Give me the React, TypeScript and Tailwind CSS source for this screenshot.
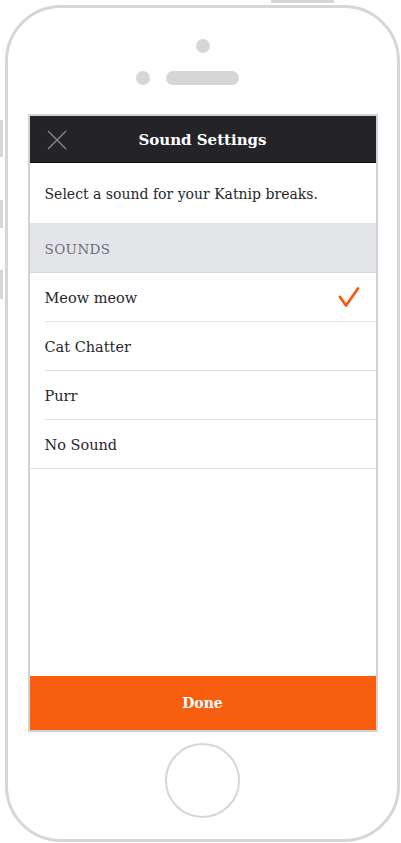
import React from 'react';

const serif = { fontFamily: '"DejaVu Serif", "Liberation Serif", serif' };

const sounds = ['Meow meow', 'Cat Chatter', 'Purr', 'No Sound'];

const App = () => {
  const selected = 'Meow meow';

  return (
    <div className="relative w-[401px] h-[843px] overflow-hidden bg-white" style={serif}>
      {/* Side buttons */}
      <div className="absolute left-[271px] top-0 w-[63px] h-[3px] bg-[#d6d6d6]" />
      <div className="absolute left-0 top-[120px] w-[3px] h-[37px] bg-[#d6d6d6]" />
      <div className="absolute left-0 top-[200px] w-[3px] h-[28px] bg-[#d6d6d6]" />
      <div className="absolute left-0 top-[270px] w-[3px] h-[29px] bg-[#d6d6d6]" />

      {/* Phone body */}
      <div className="ml-[5px] mt-[5px] w-[395px] h-[837px] border-[3px] border-[#d6d6d6] rounded-[56px] flex flex-col items-center">
        <div className="mt-[31px] w-[14px] h-[14px] rounded-full bg-[#d5d6d8]" />
        <div className="mt-[18px] flex items-center gap-4">
          <div className="w-[14px] h-[14px] rounded-full bg-[#d5d6d8]" />
          <div className="w-[73px] h-[14px] rounded-full bg-[#d5d6d8]" />
          <div className="w-[14px] h-[14px]" />
        </div>

        {/* Screen */}
        <div className="mt-[29px] w-[350px] h-[618px] border-2 border-[#d2d2d4] flex flex-col bg-white">
          <div className="h-[47px] shrink-0 bg-[#242428] border-b border-[#0c0c0e] flex items-center relative">
            <svg className="absolute left-[17px] top-[14px]" width="20" height="20" viewBox="0 0 20 20">
              <path d="M1 1L19 19M19 1L1 19" stroke="#8a8a92" strokeWidth="1.3" fill="none" />
            </svg>
            <div className="w-full text-center text-white text-[15px] font-bold pt-[2px]">Sound Settings</div>
          </div>
          <div className="h-[61px] shrink-0 border-b border-[#e2e3e6] flex items-center pl-[15px] pt-[3px] text-[14px] text-[#26262a]">
            Select a sound for your Katnip breaks.
          </div>
          <div className="h-[49px] shrink-0 bg-[#e4e5e9] border-b border-[#d8d9dd] flex items-center pl-[15px] pt-[2px] text-[13.5px] text-[#6d6c7b] tracking-[0.4px]">
            SOUNDS
          </div>
          {sounds.map((s, i) => (
            <div key={s} className={`h-[49px] shrink-0 flex items-center ${i === sounds.length - 1 ? 'border-b border-[#e2e3e6]' : 'ml-[15px] border-b border-[#e2e3e6]'}`}>
              <div className={`flex-1 text-[14.5px] text-[#26262a] pt-[3px] ${i === sounds.length - 1 ? 'pl-[15px]' : ''}`}>{s}</div>
              {s === selected && (
                <svg className="mr-[16px]" width="22" height="22" viewBox="0 0 22 22">
                  <path d="M2 11L8 19.5L20 2.5" stroke="#f45b0f" strokeWidth="2.8" fill="none" strokeLinecap="round" strokeLinejoin="round" />
                </svg>
              )}
            </div>
          ))}
          <div className="flex-1" />
          <div className="h-[54px] shrink-0 bg-[#f75e0f] flex items-center justify-center text-white text-[14px] font-bold pt-[1px]">
            Done
          </div>
        </div>

        {/* Home button */}
        <div className="mt-[11px] w-[75px] h-[75px] rounded-full border-2 border-[#d6d6d6]" />
      </div>
    </div>
  );
};

export default App;
